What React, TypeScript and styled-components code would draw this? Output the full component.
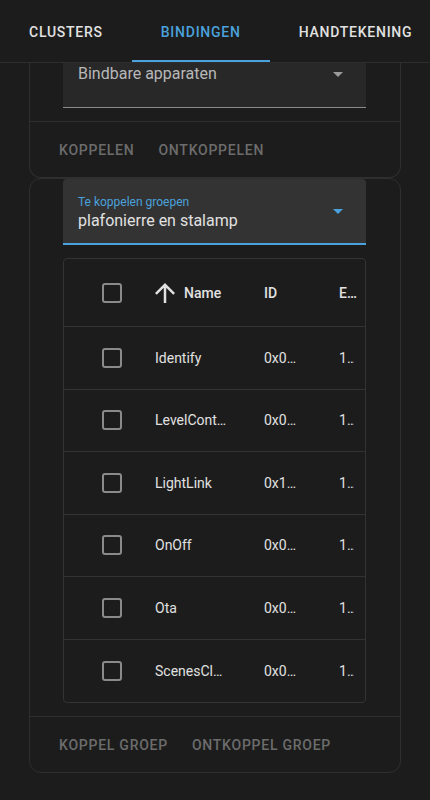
import styled, { createGlobalStyle } from "styled-components";

const GlobalStyle = createGlobalStyle`
  html, body {
    margin: 0;
    padding: 0;
    background: #1c1c1c;
  }
  body {
    font-family: Roboto, "Noto Sans", sans-serif;
    color: #e1e1e1;
    -webkit-font-smoothing: antialiased;
  }
  * {
    box-sizing: border-box;
  }
`;

const Page = styled.div`
  width: 430px;
  height: 800px;
  overflow: hidden;
  background: #1c1c1c;
`;

const TabBar = styled.nav`
  display: flex;
  height: 63px;
  border-bottom: 1px solid #2e2e2e;
  overflow: hidden;
`;

const Tab = styled.div<{ $active?: boolean }>`
  flex: none;
  display: flex;
  align-items: center;
  padding: 4px 29px 0;
  font-size: 14px;
  font-weight: 500;
  letter-spacing: 0.75px;
  text-transform: uppercase;
  color: ${(p) => (p.$active ? "#4ba1dc" : "#e1e1e1")};
  border-bottom: 2px solid ${(p) => (p.$active ? "#4ba1dc" : "transparent")};
`;

const Content = styled.main`
  padding: 0 29px;
`;

const Card = styled.section<{ $clipped?: boolean }>`
  border: 1px solid #2f2f2f;
  border-radius: ${(p) => (p.$clipped ? "0 0 12px 12px" : "12px")};
  border-top-width: ${(p) => (p.$clipped ? "0" : "1px")};
`;

const CardBody = styled.div`
  padding: 0 34px 13px 33px;
`;

const Select = styled.div<{ $focused?: boolean }>`
  display: flex;
  align-items: flex-start;
  height: ${(p) => (p.$focused ? "66px" : "45px")};
  padding: ${(p) => (p.$focused ? "15px 23px 0 15px" : "1px 23px 0 15px")};
  background: ${(p) => (p.$focused ? "#333333" : "#282828")};
  border-radius: ${(p) => (p.$focused ? "4px 4px 0 0" : "0")};
  border-bottom: ${(p) => (p.$focused ? "2px solid #4ba1dc" : "1px solid #8a8a8a")};
`;

const SelectText = styled.div`
  flex: 1;
  display: flex;
  flex-direction: column;
`;

const FloatLabel = styled.span`
  font-size: 12px;
  line-height: 16px;
  color: #4ba1dc;
`;

const Value = styled.span<{ $muted?: boolean }>`
  font-size: 16px;
  line-height: 20px;
  margin-top: ${(p) => (p.$muted ? "0" : "1px")};
  color: ${(p) => (p.$muted ? "#b8b8b8" : "#e1e1e1")};
`;

const Caret = styled.svg<{ $top: number }>`
  flex: none;
  margin-top: ${(p) => p.$top}px;
`;

const Actions = styled.div`
  display: flex;
  align-items: center;
  height: 56px;
  padding-left: 17px;
  border-top: 1px solid #2f2f2f;
`;

const TextButton = styled.button`
  height: 36px;
  padding: 0 12px;
  border: none;
  background: none;
  font-family: inherit;
  font-size: 14px;
  font-weight: 500;
  letter-spacing: 0.75px;
  text-transform: uppercase;
  color: #6c6c6c;
`;

const Table = styled.div`
  margin-top: 13px;
  border: 1px solid #333333;
  border-radius: 4px;
  overflow: hidden;
`;

const Row = styled.div<{ $header?: boolean }>`
  display: grid;
  grid-template-columns: 91px 109px 75px 1fr;
  align-items: center;
  height: ${(p) => (p.$header ? "68px" : "62.5px")};
  border-bottom: 1px solid #333333;
  font-size: 14px;
  font-weight: ${(p) => (p.$header ? 500 : 400)};
  &:last-child {
    border-bottom: none;
  }
`;

const CheckCell = styled.div`
  padding-left: 38px;
  display: flex;
  align-items: center;
`;

const Checkbox = styled.span`
  width: 20px;
  height: 20px;
  border: 2px solid #8a8a8a;
  border-radius: 3px;
`;

const Cell = styled.div<{ $max: number }>`
  max-width: ${(p) => p.$max}px;
  white-space: nowrap;
  overflow: hidden;
  text-overflow: ellipsis;
  color: #e1e1e1;
`;

const SortCell = styled.div`
  display: flex;
  align-items: center;
  gap: 9px;
`;

const rows = [
  ["Identify", "0x0003", "11"],
  ["LevelControl", "0x0008", "11"],
  ["LightLink", "0x1000", "11"],
  ["OnOff", "0x0006", "11"],
  ["Ota", "0x0019", "11"],
  ["ScenesCluster", "0x0005", "11"],
];

function DropCaret({ color, top }: { color: string; top: number }) {
  return (
    <Caret $top={top} width="10" height="5" viewBox="0 0 10 5">
      <polygon points="0,0 10,0 5,5" fill={color} />
    </Caret>
  );
}

export default function App() {
  return (
    <Page>
      <GlobalStyle />
      <TabBar>
        <Tab>Clusters</Tab>
        <Tab $active>Bindingen</Tab>
        <Tab>Handtekening</Tab>
      </TabBar>
      <Content>
        <Card $clipped>
          <CardBody>
            <Select>
              <SelectText>
                <Value $muted>Bindbare apparaten</Value>
              </SelectText>
              <DropCaret color="#9a9a9a" top={8} />
            </Select>
          </CardBody>
          <Actions>
            <TextButton>Koppelen</TextButton>
            <TextButton>Ontkoppelen</TextButton>
          </Actions>
        </Card>
        <Card>
          <CardBody>
            <Select $focused>
              <SelectText>
                <FloatLabel>Te koppelen groepen</FloatLabel>
                <Value>plafonierre en stalamp</Value>
              </SelectText>
              <DropCaret color="#4ba1dc" top={15} />
            </Select>
            <Table>
              <Row $header>
                <CheckCell>
                  <Checkbox />
                </CheckCell>
                <SortCell>
                  <svg width="20" height="20" viewBox="4 4 16 16">
                    <path
                      d="M4 12l1.41 1.41L11 7.83V20h2V7.83l5.58 5.59L20 12l-8-8-8 8z"
                      fill="#e1e1e1"
                    />
                  </svg>
                  <span>Name</span>
                </SortCell>
                <Cell $max={34}>ID</Cell>
                <Cell $max={18}>Endpoint</Cell>
              </Row>
              {rows.map(([name, id, ep]) => (
                <Row key={name}>
                  <CheckCell>
                    <Checkbox />
                  </CheckCell>
                  <Cell $max={72}>{name}</Cell>
                  <Cell $max={34}>{id}</Cell>
                  <Cell $max={15}>{ep}</Cell>
                </Row>
              ))}
            </Table>
          </CardBody>
          <Actions>
            <TextButton>Koppel groep</TextButton>
            <TextButton>Ontkoppel groep</TextButton>
          </Actions>
        </Card>
      </Content>
    </Page>
  );
}
